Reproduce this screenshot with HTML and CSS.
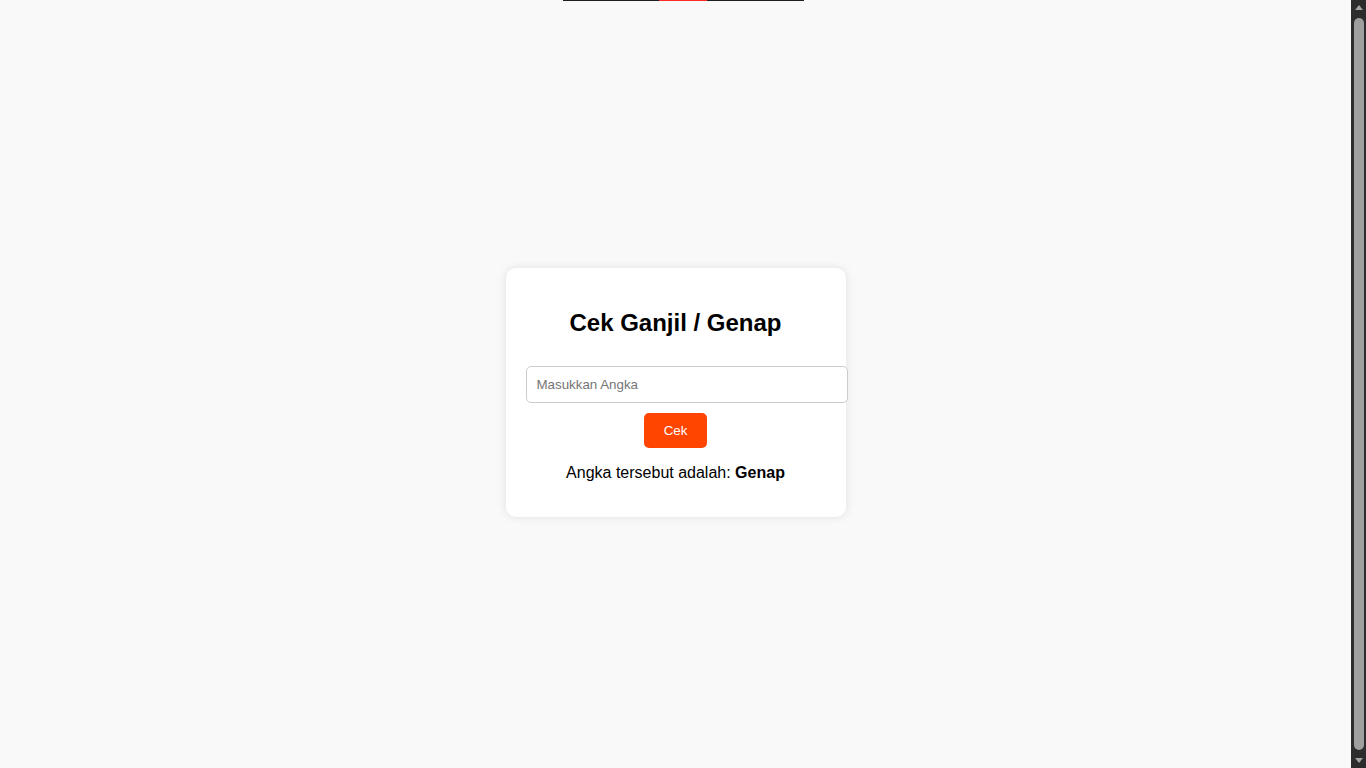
FILE: index.html
```html
<!DOCTYPE html>
<html lang="id">
<head>
<meta charset="utf-8">
<title>Cek Ganjil / Genap</title>
<link rel="stylesheet" href="styles.css">
</head>
<body>
<div class="topline"><span class="seg dark1"></span><span class="seg red"></span><span class="seg dark2"></span></div>
<div class="card">
  <h2 class="title">Cek Ganjil / Genap</h2>
  <input class="num" type="number" placeholder="Masukkan Angka">
  <button class="btn" type="button">Cek</button>
  <p class="result">Angka tersebut adalah: <strong>Genap</strong></p>
</div>
<div class="scrollbar" aria-hidden="true">
  <div class="sb-arrow"><span class="tri up"></span></div>
  <div class="sb-track"><div class="sb-thumb"></div></div>
  <div class="sb-arrow"><span class="tri down"></span></div>
</div>
</body>
</html>
```
FILE: styles.css
```css
html { overflow: hidden; }
body {
  font-family: "Liberation Sans", Arial, sans-serif;
  background: #f9f9f9;
  display: flex;
  justify-content: center;
  align-items: center;
  height: 100vh;
  margin: 8px 23px 8px 8px;
}
.topline {
  position: absolute;
  top: 0;
  left: 563px;
  width: 241px;
  height: 1px;
  display: flex;
}
.seg { display: block; height: 1px; }
.dark1 { width: 96px; background: #1e1e1e; }
.red { width: 48px; background: #ff2a2a; }
.dark2 { width: 97px; background: #1e1e1e; }
.card {
  background: #fff;
  padding: 20px;
  width: 300px;
  border-radius: 10px;
  box-shadow: 0 0 10px rgba(0, 0, 0, 0.1);
  text-align: center;
}
.title {
  font-size: 24px;
  margin: 21px 0 19px;
  color: #000;
}
.num {
  display: block;
  width: 100%;
  padding: 10px;
  margin: 29px 0 10px;
  border: 1px solid #ccc;
  border-radius: 5px;
  font-family: "Liberation Sans", Arial, sans-serif;
  font-size: 13.333px;
}
.btn {
  padding: 10px 20px;
  background: #ff4500;
  color: #fff;
  border: none;
  border-radius: 5px;
  font-family: "Liberation Sans", Arial, sans-serif;
  font-size: 13.333px;
}
.result {
  font-size: 16px;
  margin: 16px 0 15px;
}
.scrollbar {
  position: fixed;
  top: 0;
  right: 0;
  width: 15px;
  height: 100vh;
  background: #2c2c2c;
  display: flex;
  flex-direction: column;
}
.sb-arrow {
  height: 15px;
  display: flex;
  align-items: center;
  justify-content: center;
  flex: none;
}
.tri {
  width: 0;
  height: 0;
  border-left: 4px solid transparent;
  border-right: 4px solid transparent;
}
.tri.up { border-bottom: 5px solid #a3a3a3; }
.tri.down { border-top: 5px solid #a3a3a3; }
.sb-track {
  flex: 1;
  padding: 3px 2px 3px 3px;
  display: flex;
}
.sb-thumb {
  flex: 1;
  background: #9f9f9f;
  border-radius: 5px;
}
```
